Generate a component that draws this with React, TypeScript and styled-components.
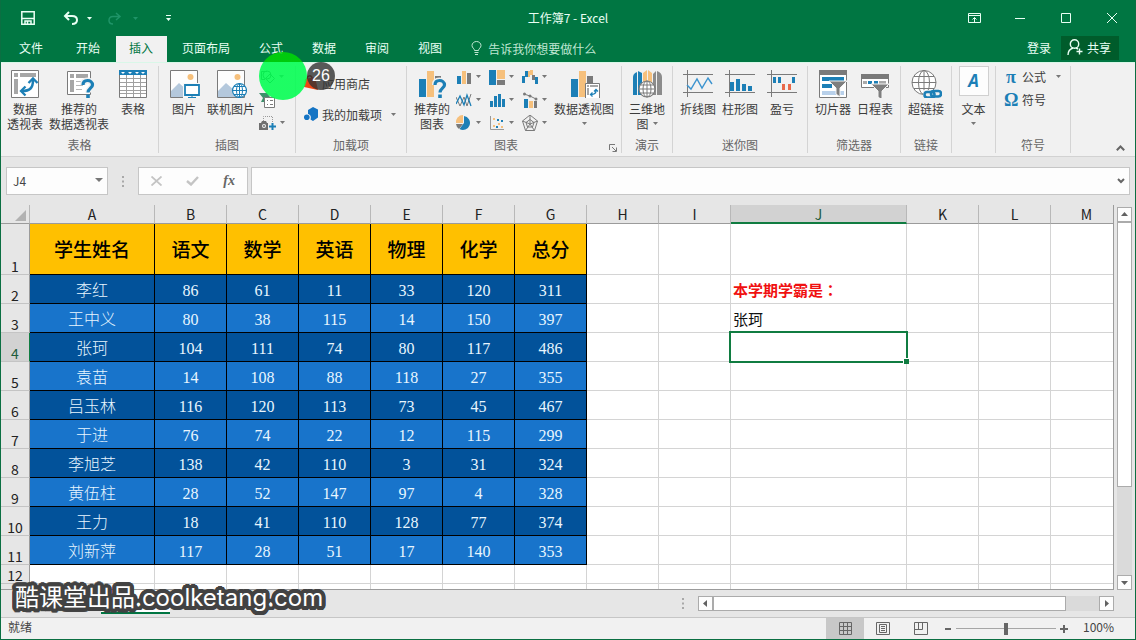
import React from "react";
import styled, { createGlobalStyle, css } from "styled-components";

const green = "#007642";
const blue = "#1c7fb6";
const sand = "#f6c07c";
const grey = "#7a7a7a";
const uiFont = `"Noto Sans CJK SC", "Noto Sans", sans-serif`;

const GlobalStyle = createGlobalStyle`
  *, *::before, *::after { box-sizing: border-box; }
  body { margin: 0; font-family: ${uiFont}; font-size: 12px; color: #444; }
  button, input { font: inherit; color: inherit; border: 0; padding: 0; margin: 0; background: none; border-radius: 0; }
  svg { display: block; flex: none; }
`;

const Window = styled.div`
  position: relative;
  display: flex;
  flex-direction: column;
  height: 100vh;
  overflow: hidden;
  background: #e6e6e6;
  border: 1px solid #0b6f42;
  border-top: 0;
`;

/* ---------- title bar ---------- */
const TitleBar = styled.header`
  display: grid;
  grid-template-columns: 1fr auto 1fr;
  align-items: center;
  height: 36px;
  flex: none;
  background: ${green};
  color: #e9fff4;
`;
const QuickAccess = styled.div`
  display: flex;
  align-items: center;
  padding-left: 20px;
`;
const QuickButton = styled.button<{ $gap?: number; $dim?: boolean }>`
  display: flex;
  margin-right: ${(p) => p.$gap ?? 0}px;
  color: ${(p) => (p.$dim ? "#1f9468" : "#e9fff4")};
`;
const Title = styled.h1`
  margin: 0;
  font-size: 12px;
  font-weight: 400;
  line-height: 18px;
`;
const WindowButtons = styled.div`
  display: flex;
  justify-content: flex-end;
`;
const WindowButton = styled.button`
  display: grid;
  place-items: center;
  width: 46px;
  height: 32px;
`;

/* ---------- ribbon tabs ---------- */
const TabBar = styled.nav`
  display: flex;
  height: 26px;
  flex: none;
  background: ${green};
  color: #e9fff4;
`;
const Tab = styled.button<{ $active?: boolean; $file?: boolean }>`
  margin: 0 1px;
  padding: ${(p) => (p.$file ? "0 18px 2px 17px" : "0 14px 2px 13px")};
  line-height: 24px;
  white-space: nowrap;
  ${(p) => p.$active && css`background: #f1f1f1; color: ${green};`}
`;
const TellMe = styled.button`
  display: flex;
  align-items: center;
  gap: 6px;
  margin-left: 14px;
  padding-bottom: 2px;
  color: #bfe6d2;
`;
const Account = styled.div`
  display: flex;
  align-items: center;
  gap: 10px;
  margin-left: auto;
  padding-right: 16px;
  padding-bottom: 2px;

  > button { padding-bottom: 2px; }
`;
const ShareButton = styled.button`
  display: flex;
  align-items: center;
  gap: 4px;
  height: 24px;
  padding: 0 8px 0 6px;
  background: #005c2b;
`;

/* ---------- ribbon ---------- */
const Ribbon = styled.section`
  position: relative;
  display: flex;
  flex: none;
  height: 95px;
  padding: 3px 0;
  background: #f1f1f1;
  border-top: 1px solid #d9f7e8;
  border-bottom: 1px solid #d2d2d2;
`;
const Group = styled.div<{ $w: number }>`
  display: flex;
  flex-direction: column;
  flex: none;
  position: relative;
  width: ${(p) => p.$w}px;
  border-right: 1px solid #d4d4d4;
`;
const GroupBody = styled.div<{ $pad?: number }>`
  display: flex;
  flex: 1;
  padding-left: ${(p) => p.$pad ?? 0}px;
`;
const GroupLabel = styled.div<{ $end?: number }>`
  height: 16px;
  padding-right: ${(p) => p.$end ?? 0}px;
  line-height: 16px;
  text-align: center;
  color: #666;
`;
const BigButton = styled.button<{ $w: number }>`
  display: flex;
  flex-direction: column;
  align-items: center;
  flex: none;
  width: ${(p) => p.$w}px;
  line-height: 15px;
  white-space: nowrap;
  text-align: center;
  color: #3c3c3c;

  > svg { margin-bottom: 3px; }
`;
const ButtonLine = styled.span`
  display: flex;
  align-items: center;
  justify-content: center;
  gap: 4px;
  height: 15px;
`;
const SmallGrid = styled.div<{ $cols: string }>`
  display: grid;
  grid-template-columns: ${(p) => p.$cols};
  grid-auto-rows: 23px;
  align-content: start;
  margin: -1px 0 0 2px;
`;
const SmallButton = styled.button`
  display: flex;
  align-items: center;
  gap: 4px;
`;
const AddInList = styled.div`
  display: flex;
  flex-direction: column;
  gap: 11px;
  padding-top: 7px;
`;
const AddInButton = styled.button`
  display: flex;
  align-items: center;
  gap: 3px;
  height: 20px;
  color: #3c3c3c;
  white-space: nowrap;

  > svg:last-child { margin-left: 6px; }
`;
const SymbolList = styled.div`
  display: flex;
  flex-direction: column;
  align-items: flex-start;
  margin-top: -1px;
`;
const SymbolButton = styled.button`
  display: flex;
  align-items: center;
  gap: 4px;
  height: 23px;
  color: #3c3c3c;

  > svg { margin-left: 6px; }
`;
const SymbolGlyph = styled.span`
  width: 14px;
  font: bold 18px/20px "Liberation Serif", serif;
  color: ${blue};
`;
const TextTile = styled.span`
  display: grid;
  place-items: center;
  width: 30px;
  height: 30px;
  margin-bottom: 5px;
  background: #fdfdfd;
  border: 1px solid #d0d0d0;
  font: italic bold 17px/20px "Open Sans", sans-serif;
  color: ${blue};
`;
const Launcher = styled.button`
  position: absolute;
  right: 4px;
  bottom: 1px;
`;
const Collapse = styled.button`
  align-self: flex-end;
  margin-left: auto;
  padding: 0 10px 2px 0;
`;
const ClickHalo = styled.div`
  position: absolute;
  z-index: 2;
  left: 258px;
  top: -11px;
  width: 48px;
  height: 48px;
  border-radius: 50%;
  background: linear-gradient(rgba(0, 212, 8, 0.9) 10px, rgba(0, 255, 80, 0.88) 10px);
`;
const ClickCount = styled.div`
  position: absolute;
  z-index: 3;
  left: 306px;
  top: -1px;
  width: 28px;
  height: 28px;
  border-radius: 50%;
  background: rgba(50, 50, 50, 0.8);
  color: #fff;
  font: 16px/28px "Liberation Sans", sans-serif;
  text-align: center;
`;

/* ---------- formula bar ---------- */
const FormulaBar = styled.div`
  display: flex;
  flex: none;
  height: 48px;
  padding: 10px 5px;
`;
const Field = styled.div`
  display: flex;
  align-items: center;
  height: 28px;
  background: #fdfdfd;
  border: 1px solid #c6c6c6;
`;
const NameBox = styled(Field)`
  width: 102px;
  padding: 0 4px 2px 6px;

  input { flex: 1; width: 0; }
`;
const Grip = styled.div`
  display: grid;
  place-items: center;
  width: 30px;
`;
const EntryTools = styled(Field)`
  width: 110px;
  justify-content: space-between;
  padding: 0 12px;
`;
const FormulaBox = styled(Field)`
  flex: 1;
  margin-left: 3px;
  padding: 0 4px;

  input { flex: 1; }
`;
const FxButton = styled.button`
  font: italic bold 14px/20px "Liberation Serif", serif;
  color: #666;
`;

/* ---------- sheet ---------- */
const SheetArea = styled.main`
  display: flex;
  flex: 1;
  min-height: 0;
  padding-right: 3px;
`;
const SheetView = styled.div`
  flex: 1;
  min-width: 0;
  overflow: hidden;
  border-right: 1px solid #9b9b9b;
  border-bottom: 1px solid #9b9b9b;
`;
const Grid = styled.table`
  width: max(100%, 1122px);
  table-layout: fixed;
  border-collapse: separate;
  border-spacing: 0;
  background: #fff;
`;
const ColHead = styled.th<{ $on?: boolean }>`
  height: 19px;
  padding: ${(p) => (p.$on ? 2 : 1)}px 0 1px;
  line-height: 14px;
  background: ${(p) => (p.$on ? "#d2d2d2" : "#e6e6e6")};
  border-right: 1px solid #b8b8b8;
  border-bottom: ${(p) => (p.$on ? `2px solid #107c41` : "1px solid #9b9b9b")};
  font-size: 14px;
  font-weight: 400;
  color: ${(p) => (p.$on ? "#1d5c3c" : "#222")};
`;
const Corner = styled(ColHead)`
  padding: 0 3px 2px 0;
  vertical-align: bottom;

  svg { margin-left: auto; }
`;
const Row = styled.tr<{ $h: number }>`
  height: ${(p) => p.$h}px;
`;
const RowHead = styled.th<{ $on?: boolean }>`
  padding: 0;
  vertical-align: bottom;
  line-height: 16px;
  background: ${(p) => (p.$on ? "#d2d2d2" : "#e6e6e6")};
  border-right: 1px solid ${(p) => (p.$on ? "#107c41" : "#9b9b9b")};
  border-bottom: 1px solid #c4c4c4;
  font-size: 14px;
  font-weight: 400;
  color: ${(p) => (p.$on ? "#1d5c3c" : "#222")};
`;
type CellKind = "head" | "dark" | "light" | "plain";
const fills: Record<CellKind, string> = { head: "#ffc000", dark: "#02529a", light: "#1874cb", plain: "#fff" };
const Cell = styled.td<{ $kind: CellKind }>`
  position: relative;
  padding: ${(p) => (p.$kind === "plain" ? 0 : 4)}px 0 0;
  text-align: center;
  white-space: nowrap;
  background: ${(p) => fills[p.$kind]};
  border-right: 1px solid ${(p) => (p.$kind === "plain" ? "#d4d4d4" : "#000")};
  border-bottom: 1px solid ${(p) => (p.$kind === "plain" ? "#d4d4d4" : "#000")};
  color: #e8f6ff;
  font: 300 16px/18px "Liberation Serif", "Noto Sans CJK SC", serif;
  ${(p) => p.$kind === "head" && css`color: #000; font-size: 19px; font-weight: 500;`}
`;
const NoteCell = styled(Cell)<{ $strong?: boolean }>`
  padding: 2px 0 0 2px;
  text-align: left;
  color: ${(p) => (p.$strong ? "#f01010" : "#111")};
  font: ${(p) => (p.$strong ? 700 : 400)} 15px/18px ${uiFont};
`;
const Colon = styled.span`
  font-family: "Noto Sans CJK TC", sans-serif;
`;
const Selection = styled.div`
  position: absolute;
  z-index: 1;
  inset: -2px;
  border: 2px solid #107c41;

  &::after {
    content: "";
    position: absolute;
    right: -3px;
    bottom: -3px;
    width: 6px;
    height: 6px;
    background: #107c41;
    border: solid #fff;
    border-width: 1px 0 0 1px;
  }
`;

/* ---------- scroll bars ---------- */
const VScroll = styled.div`
  display: flex;
  flex-direction: column;
  width: 15px;
  margin: 2px 0 0 3px;
  background: #dadada;
`;
const HScroll = styled.div`
  display: flex;
  width: 416px;
  height: 15px;
  background: #dadada;
`;
const ScrollButton = styled.button`
  display: grid;
  place-items: center;
  flex: none;
  width: 15px;
  height: 15px;
  background: #fdfdfd;
  border: 1px solid #ababab;
`;
const ScrollThumb = styled.div<{ $grow: number }>`
  flex: ${(p) => p.$grow};
  background: #fff;
  border: 1px solid #ababab;
`;
const ScrollRest = styled.div<{ $grow: number }>`
  flex: ${(p) => p.$grow};
`;

/* ---------- sheet tabs, status bar ---------- */
const SheetBar = styled.div`
  display: flex;
  align-items: center;
  flex: none;
  height: 28px;
  padding: 0 21px 0 100px;
  border-bottom: 1px solid #c6c6c6;
`;
const SheetTab = styled.button`
  align-self: flex-start;
  width: 69px;
  height: 24px;
  background: #fff;
  border-bottom: 2px solid ${green};
  color: ${green};
  font-weight: 700;
`;
const SheetGrip = styled.div`
  margin: 0 14px 0 auto;
`;
const StatusBar = styled.footer`
  display: flex;
  align-items: center;
  flex: none;
  height: 21px;
  padding: 0 20px 0 7px;
  background: #f1f1f1;
`;
const Ready = styled.span`
  margin-right: auto;
  padding-bottom: 4px;
  line-height: 17px;
`;
const ViewButton = styled.button<{ $on?: boolean }>`
  display: grid;
  place-items: center;
  width: 38px;
  height: 21px;
  background: ${(p) => (p.$on ? "#c8c8c8" : "transparent")};
`;
const ZoomStep = styled.button`
  display: grid;
  place-items: center;
  width: 16px;
  height: 20px;
`;
const ZoomSlider = styled.input`
  appearance: none;
  width: 100px;
  height: 12px;
  background: linear-gradient(#a6a6a6, #a6a6a6) center / 100% 1px no-repeat;

  &::-webkit-slider-thumb {
    appearance: none;
    width: 4px;
    height: 12px;
    background: #666;
  }
`;
const ZoomValue = styled.span`
  width: 32px;
  margin-left: 11px;
  padding-bottom: 4px;
  line-height: 17px;
`;

const outline = Array.from({ length: 24 }, (_, i) => {
  const a = (i * Math.PI) / 12;
  return `${(4 * Math.cos(a)).toFixed(1)}px ${(4 * Math.sin(a)).toFixed(1)}px 0 #424242`;
}).join(", ");
const Watermark = styled.div`
  position: absolute;
  z-index: 4;
  left: 14px;
  bottom: 24px;
  font: 24px/34px Inter, "Noto Sans CJK SC", sans-serif;
  color: #fff;
  white-space: nowrap;
  text-shadow: ${outline}, 0 0 4px #424242;
`;

/* ---------- icons ---------- */
const Caret = ({ color = "#777" }: { color?: string }) => (
  <svg width="5" height="3" viewBox="0 0 5 3"><path d="M0 0h5L2.5 3z" fill={color} /></svg>
);
const Dots = () => (
  <svg width="2" height="11" viewBox="0 0 2 11" fill="#a8a8a8"><path d="M0 0h2v2H0zM0 4.500h2v2H0zM0 9h2v2H0z" /></svg>
);
const Arrow = ({ d }: { d: string }) => (
  <svg width="7" height="7" viewBox="0 0 7 7"><path d={d} fill="#606060" /></svg>
);
const Big = ({ children }: { children: React.ReactNode }) => (
  <svg width="32" height="32" viewBox="0 1 32 32" fill="none">{children}</svg>
);
const Small = ({ children }: { children: React.ReactNode }) => (
  <svg width="16" height="16" viewBox="0 0 16 16" fill="none">{children}</svg>
);
const Question = ({ x, y }: { x: number; y: number }) => (
  <g transform={`translate(${x} ${y})`}>
    <path d="M2 6C2 2.500 4 1.500 6.500 1.500S11.500 3 11.500 6C11.500 9 7 9.500 7 13.500" stroke="#f1f1f1" strokeWidth="6" />
    <path d="M2 6C2 2.500 4 1.500 6.500 1.500S11.500 3 11.500 6C11.500 9 7 9.500 7 13.500" stroke={blue} strokeWidth="3.200" />
    <path d="M5.200 15.500h3.600v3.600H5.200z" fill={blue} />
  </g>
);
const PivotTableIcon = () => (
  <Big>
    <path d="M2.500 5.500h27v27h-27z" fill="#fff" stroke={grey} />
    <path d="M5 8h4v4H5zM11 8h16v4H11zM5 14h4v15H5z" fill="#a6a6a6" />
    <path d="M13 26c8 0 11-3 11-11" stroke={blue} strokeWidth="2.500" />
    <path d="M19.500 18L24 13.500l4.500 4.500M16.500 21.500L12 26l4.500 4.500" stroke={blue} strokeWidth="2.300" />
  </Big>
);
const RecommendedPivotIcon = () => (
  <Big>
    <path d="M4.500 6.500h23v23h-23z" fill="#fff" stroke={grey} />
    <path d="M7 9h4v4H7zM13 9h12v4H13zM7 15h4v12H7z" fill="#a6a6a6" />
    <path d="M13 16.500h8M13 20.500h7M13 24.500h6" stroke="#b8b8b8" />
    <Question x={18} y={14} />
  </Big>
);
const TableIcon = () => (
  <Big>
    <path d="M2.500 5.500h27v27h-27z" fill="#fff" stroke={grey} />
    <path d="M2 5h28v5H2z" fill={blue} />
    <path d="M4 7h4L6 9zM11 7h4l-2 2zM18 7h4l-2 2zM24 7h4l-2 2z" fill="#fff" />
    <path d="M9.500 10v22M16.500 10v22M23.500 10v22M3 13.500h26M3 17.500h26M3 21.500h26M3 25.500h26M3 28.500h26" stroke="#a0a0a0" />
  </Big>
);
const PictureBase = () => (
  <>
    <path d="M2.500 5.500h27v27h-27z" fill="#fdfdfd" stroke={grey} />
    <circle cx="22.500" cy="12" r="3" fill={sand} />
    <path d="M3 32V26l8-8 9 8v6z" fill="#b4c8dc" />
  </>
);
const PictureIcon = () => (
  <Big>
    <PictureBase />
    <path d="M15 18h17v15H15z" fill="#f8f8f8" />
    <path d="M17 20h14v10H17z" fill="#fff" stroke={blue} strokeWidth="1.800" />
    <path d="M20 32.500h8M24 30v2" stroke={blue} />
  </Big>
);
const OnlinePictureIcon = () => (
  <Big>
    <PictureBase />
    <circle cx="24.500" cy="25.500" r="7" fill="#fff" stroke={blue} strokeWidth="1.200" />
    <ellipse cx="24.500" cy="25.500" rx="3" ry="7" stroke={blue} />
    <path d="M18 25.500h13M19 21.500h11M19 29.500h11M24.500 19v13" stroke={blue} />
  </Big>
);
const ShapesIcon = () => (
  <Small>
    <path d="M8 2.500H2.500v8H6" stroke="#555" />
    <circle cx="8" cy="6" r="4" stroke="#555" />
    <path d="M11 5l4.500 4.500L11 14l-4.500-4.500z" stroke="#555" />
  </Small>
);
const SmartArtIcon = () => (
  <Small>
    <path d="M0 1h8l3 4H6v5H2l2-4z" fill="#3d8f6b" />
    <path d="M5.500 5.500h10v10h-10z" fill="#fff" stroke={grey} />
    <path d="M8 8.500h1M11 8.500h3M8 12.500h1M11 12.500h3" stroke={grey} />
  </Small>
);
const ScreenshotIcon = () => (
  <svg width="17" height="16" viewBox="0 0 17 16" fill="none">
    <path d="M4.500 6V1.500h9V7" stroke="#999" strokeDasharray="1 1" />
    <path d="M0 8h2l1-2h4l1 2h1v7H0z" fill="#6f6f6f" />
    <circle cx="5" cy="11" r="2" fill="#f1f1f1" /><circle cx="5" cy="11" r="1" fill="#6f6f6f" />
    <path d="M13.500 8v7M10 11.500h7" stroke={blue} strokeWidth="2" />
  </svg>
);
const StoreIcon = () => (
  <Small><path d="M2 4l10-2 3 13L1 12z" fill="#f04414" /><path d="M4 4c0-4 5-4 5-1" stroke="#a02808" strokeWidth="1.500" /></Small>
);
const AddInIcon = () => (
  <Small>
    <path d="M10 1l5 2.500v8L10 15l-2.500-1.500c1-2.500 0-5-2.500-5.500V4z" fill="#1474c4" /><circle cx="3.800" cy="11.200" r="2.800" fill="#1474c4" />
  </Small>
);
const BigBars = () => (
  <><path d="M3 14h7v18H3z" fill={blue} /><path d="M11 6h7v26h-7z" fill={sand} /><path d="M19 11h6v21h-6z" fill={grey} /></>
);
const RecommendedChartIcon = () => (
  <Big>
    <path d="M3 14h7v18H3z" fill={blue} /><path d="M11 6h7v26h-7z" fill={sand} /><path d="M19 11h6v4h-6z" fill={grey} />
    <Question x={17} y={14} />
  </Big>
);
const PivotChartIcon = () => (
  <Big>
    <BigBars />
    <path d="M17.500 18.500h14v15h-14z" fill="#fff" stroke={grey} />
    <path d="M19 20h2v2h-2zM22 20h8v2h-8zM19 23h2v7h-2z" fill="#a6a6a6" />
    <path d="M23 29.500c3 0 5-1 5-4M26 26.500l2-2 2 2M24.500 27.500l-2 2 2 2" stroke={blue} strokeWidth="1.300" />
  </Big>
);
const Map3DIcon = () => (
  <Big>
    <path d="M2 30V13c0-4 2-5 4-6v23zM7 30V6l4 2v22z" fill={blue} />
    <path d="M12 31V8l4-3v26zM17 31V5l4 3v23z" fill={sand} />
    <path d="M22 30V9l3-3v24zM26 30V6c3 1 5 3 5 6v18z" fill="#8c8c8c" />
    <circle cx="16" cy="24" r="8" fill="#fff" stroke={grey} strokeWidth="1.200" />
    <ellipse cx="16" cy="24" rx="4" ry="8" stroke={grey} /><path d="M8 24h16M9.500 20h13M9.500 28h13M16 16v16" stroke={grey} />
  </Big>
);
const chartIcons: React.ReactNode[] = [
  <><path d="M1 7h4v8H1z" fill={blue} /><path d="M6 2h4v13H6z" fill={sand} /><path d="M11 4h4v11h-4z" fill={grey} /></>,
  <><path d="M0 1h7v15H0z" fill={blue} /><path d="M8 1h8v9H8z" fill={sand} /><path d="M8 11h8v5H8z" fill={grey} /></>,
  <><path d="M0 7h3v7H0zM3 2h3v6H3z" fill={blue} /><path d="M6 2h2v6H6zM8 1h3v5H8z" fill={sand} /><path d="M10 6h3v5h-3z" fill={grey} /><path d="M13 8h3v7h-3z" fill={blue} /></>,
  <><path d="M0 5l4 9 4-9 3 9 4-12" stroke={grey} /><path d="M0 12L4 4l4 9 3-10 4 11" stroke={blue} strokeWidth="1.300" /></>,
  <path d="M1 9h3v6H1zM5 4h3v11H5zM9 2h3v13H9zM13 7h3v8h-3z" fill={blue} />,
  <><path d="M2 7h4v9H2z" fill={blue} /><path d="M7 9h4v7H7z" fill={sand} /><path d="M12 9h3v7h-3z" fill={grey} /><path d="M2 2l6 2 6 3" stroke={grey} /><circle cx="2.500" cy="2" r="1.500" fill={grey} /><circle cx="8" cy="4" r="1.500" fill={grey} /><circle cx="14" cy="7" r="1.500" fill={grey} /></>,
  <><path d="M7 0v8H0a7 7 0 0 1 7-8z" fill={sand} /><path d="M8 1a7 7 0 1 1-4.500 13L8 8z" fill={blue} /><path d="M0 9h7l-4 5A7 7 0 0 1 0 9z" fill={grey} /></>,
  <><path d="M1.500 1v13.500H15" stroke="#999" /><path d="M4 3h2v2H4zM9 8h2v2H9zM4 10h2v2H4zM12 11h2v2h-2z" fill={sand} /><path d="M8 4h2v2H8zM12 5h2v2h-2zM7 11h2v2H7z" fill={blue} /></>,
  <><path d="M8 0l7.500 6-3 9.500h-9L.5 6zM8 4.500l4 3-1.500 4.500h-5L4 7.500zM8 0v9l7.500-3M8 9l4.500 6.500M8 9l-4.500 6.500M8 9L.5 6" stroke={grey} /></>,
];
const SparkAxes = () => <path d="M5.500 5v27M1 9.500h30M1 27.500h30" stroke={grey} />;
const SparkLineIcon = () => (
  <Big><SparkAxes /><path d="M5 20l4 4 6-10 5 9 6-10 4 6" stroke="#3b93cf" strokeWidth="1.400" /></Big>
);
const SparkColumnIcon = () => (
  <Big><SparkAxes /><path d="M6 17h4v9H6zM12 14h4v12h-4zM18 19h4v7h-4zM24 21h4v5h-4z" fill={blue} /></Big>
);
const SparkWinLossIcon = () => (
  <Big><SparkAxes /><path d="M7 12h3v6H7zM12 12h3v6h-3zM26 12h3v6h-3z" fill={blue} /><path d="M16 19h3v6h-3zM22 19h3v6h-3z" fill="#e8694a" /></Big>
);
const Funnel = ({ y }: { y: number }) => (
  <path transform={`translate(0 ${y})`} d="M12 0h18l-7 7v9l-4-3V7z" fill="#7f7f7f" stroke="#f5f5f5" />
);
const SlicerIcon = () => (
  <Big>
    <path d="M2.500 5.500h27v27h-27z" fill="#fff" stroke={grey} /><path d="M2 5h28v5H2z" fill={grey} />
    <path d="M5 12h22v4H5zM5 19h10v4H5z" fill={blue} /><path d="M5 26h22v4H5z" fill="#b8d0ea" /><Funnel y={16} />
  </Big>
);
const TimelineIcon = () => (
  <Big>
    <path d="M2.500 9.500h27v13h-27z" fill="#fff" stroke={grey} /><path d="M2 9h28v5H2z" fill={grey} />
    <path d="M4 16h4v3H4zM20 16h7v3h-7z" fill="#aaa" /><path d="M9 16h4v3H9zM15 16h4v3h-4z" fill={blue} /><Funnel y={19} />
  </Big>
);
const LinkIcon = () => (
  <Big>
    <circle cx="14" cy="17.500" r="12" fill="#fff" stroke={grey} />
    <ellipse cx="14" cy="17.500" rx="5.500" ry="12" stroke={grey} /><path d="M2 17.500h24M4 11.500h20M4 23.500h20M14 5v25" stroke={grey} />
    <path d="M13 25h19v9H13z" fill="#f1f1f1" />
    <rect x="14.500" y="27" width="10" height="5.500" rx="2.700" stroke={blue} strokeWidth="2.600" />
    <rect x="21" y="26" width="10" height="5.500" rx="2.700" stroke={blue} strokeWidth="2.600" />
  </Big>
);

/* ---------- data ---------- */
const header = ["学生姓名", "语文", "数学", "英语", "物理", "化学", "总分"];
const students: (string | number)[][] = [
  ["李红", 86, 61, 11, 33, 120, 311],
  ["王中义", 80, 38, 115, 14, 150, 397],
  ["张珂", 104, 111, 74, 80, 117, 486],
  ["袁苗", 14, 108, 88, 118, 27, 355],
  ["吕玉林", 116, 120, 113, 73, 45, 467],
  ["于进", 76, 74, 22, 12, 115, 299],
  ["李旭芝", 138, 42, 110, 3, 31, 324],
  ["黄伍柱", 28, 52, 147, 97, 4, 328],
  ["王力", 18, 41, 110, 128, 77, 374],
  ["刘新萍", 117, 28, 51, 17, 140, 353],
];
const columns: [string, number | undefined][] = [
  ["A", 125], ["B", 72], ["C", 72], ["D", 72], ["E", 72], ["F", 72], ["G", 72],
  ["H", 72], ["I", 72], ["J", 176], ["K", 72], ["L", 72], ["M", undefined],
];
const rows = [header, ...students, [], []];

const renderCell = (row: number, col: number, value: string | number | undefined) => {
  if (col === 9 && row === 2) return <NoteCell key={col} $kind="plain" $strong>本学期学霸是<Colon>：</Colon></NoteCell>;
  if (col === 9 && row === 3) return <NoteCell key={col} $kind="plain">张珂</NoteCell>;
  if (col === 9 && row === 4) return <Cell key={col} $kind="plain"><Selection /></Cell>;
  if (value === undefined) return <Cell key={col} $kind="plain" />;
  return <Cell key={col} $kind={row === 1 ? "head" : row % 2 === 0 ? "dark" : "light"}>{value}</Cell>;
};

export default function App() {
  return (
    <Window>
      <GlobalStyle />
      <TitleBar>
        <QuickAccess>
          <QuickButton aria-label="保存" $gap={28}>
            <svg width="14" height="14" viewBox="0 0 14 14" fill="none" stroke="currentColor" strokeWidth="1.500"><path d="M.8.800h12.400v12.400H.8zM1 7.500h12M4 13v-3h6v3M6.500 10.500V13" /></svg>
          </QuickButton>
          <QuickButton aria-label="撤消" $gap={9}>
            <svg width="15" height="14" viewBox="0 0 15 14" fill="none" stroke="currentColor" strokeWidth="2"><path d="M6 1L2 5l4 4M2 5h7c3 0 5 1.500 5 4s-2 4-5 4" /></svg>
          </QuickButton>
          <QuickButton aria-label="撤消列表" $gap={16}><Caret color="#e9fff4" /></QuickButton>
          <QuickButton aria-label="恢复" $dim $gap={11}>
            <svg width="14" height="14" viewBox="0 0 14 14" fill="none" stroke="currentColor" strokeWidth="1.500"><path d="M8 2l4 3.500L8 9M12 5.500H5C2.500 5.500 1 7 1 9.500S2.500 13 5 13" /></svg>
          </QuickButton>
          <QuickButton aria-label="恢复列表" $dim $gap={27}><Caret color="#1f9468" /></QuickButton>
          <QuickButton aria-label="自定义快速访问工具栏">
            <svg width="7" height="6" viewBox="0 0 7 6" fill="currentColor"><path d="M1 0h5v1H1zM1 3h5L3.500 6z" /></svg>
          </QuickButton>
        </QuickAccess>
        <Title>工作簿7 - Excel</Title>
        <WindowButtons>
          <WindowButton aria-label="功能区显示选项">
            <svg width="13" height="10" viewBox="0 0 13 10" fill="none" stroke="currentColor"><path d="M.5.500h12v9H.5zM.5 2.500h12M6.500 9V4.500M4.500 6.500l2-2 2 2" /></svg>
          </WindowButton>
          <WindowButton aria-label="最小化"><svg width="10" height="10" viewBox="0 0 10 10" stroke="currentColor"><path d="M0 5.500h10" /></svg></WindowButton>
          <WindowButton aria-label="最大化"><svg width="10" height="10" viewBox="0 0 10 10" fill="none" stroke="currentColor"><path d="M.5.500h9v9h-9z" /></svg></WindowButton>
          <WindowButton aria-label="关闭"><svg width="10" height="10" viewBox="0 0 10 10" stroke="currentColor"><path d="M0 0l10 10M10 0L0 10" /></svg></WindowButton>
        </WindowButtons>
      </TitleBar>

      <TabBar>
        <Tab $file>文件</Tab>
        <Tab>开始</Tab>
        <Tab $active>插入</Tab>
        <Tab>页面布局</Tab>
        <Tab>公式</Tab>
        <Tab>数据</Tab>
        <Tab>审阅</Tab>
        <Tab>视图</Tab>
        <TellMe>
          <svg width="11" height="14" viewBox="0 0 11 14" fill="none" stroke="currentColor"><path d="M3.500 9.500C3.500 7.500 1 7 1 4.500a4.500 4 0 0 1 9 0C10 7 7.500 7.500 7.500 9.500zM3.500 11.500h4M4 13.500h3" /></svg>
          告诉我你想要做什么
        </TellMe>
        <Account>
          <button>登录</button>
          <ShareButton>
            <svg width="16" height="16" viewBox="0 0 16 16" fill="none" stroke="currentColor" strokeWidth="1.400"><circle cx="7.500" cy="5" r="4.200" /><path d="M1 16c0-4 2-6 5-7M9 9l2 1M12.500 9.500v6M9.500 12.500h6" /></svg>
            共享
          </ShareButton>
        </Account>
      </TabBar>

      <Ribbon>
        <Group $w={158}>
          <GroupBody>
            <BigButton $w={48}><PivotTableIcon /><ButtonLine>数据</ButtonLine><ButtonLine>透视表</ButtonLine></BigButton>
            <BigButton $w={60}><RecommendedPivotIcon /><ButtonLine>推荐的</ButtonLine><ButtonLine>数据透视表</ButtonLine></BigButton>
            <BigButton $w={48}><TableIcon /><ButtonLine>表格</ButtonLine></BigButton>
          </GroupBody>
          <GroupLabel>表格</GroupLabel>
        </Group>
        <Group $w={137}>
          <GroupBody $pad={4}>
            <BigButton $w={42}><PictureIcon /><ButtonLine>图片</ButtonLine></BigButton>
            <BigButton $w={52}><OnlinePictureIcon /><ButtonLine>联机图片</ButtonLine></BigButton>
            <SmallGrid $cols="30px">
              <SmallButton aria-label="形状"><ShapesIcon /><Caret /></SmallButton>
              <SmallButton aria-label="SmartArt"><SmartArtIcon /></SmallButton>
              <SmallButton aria-label="屏幕截图"><ScreenshotIcon /><Caret /></SmallButton>
            </SmallGrid>
          </GroupBody>
          <GroupLabel>插图</GroupLabel>
        </Group>
        <Group $w={111}>
          <GroupBody $pad={7}>
            <AddInList>
              <AddInButton><StoreIcon /><span>应用商店</span></AddInButton>
              <AddInButton><AddInIcon /><span>我的加载项</span><Caret /></AddInButton>
            </AddInList>
          </GroupBody>
          <GroupLabel>加载项</GroupLabel>
        </Group>
        <Group $w={215}>
          <GroupBody $pad={3}>
            <BigButton $w={44}><RecommendedChartIcon /><ButtonLine>推荐的</ButtonLine><ButtonLine>图表</ButtonLine></BigButton>
            <SmallGrid $cols="33px 33px 31px">
              {chartIcons.map((icon, i) => (
                <SmallButton key={i} aria-label={`图表 ${i + 1}`}><Small>{icon}</Small><Caret /></SmallButton>
              ))}
            </SmallGrid>
            <BigButton $w={62}><PivotChartIcon /><ButtonLine>数据透视图</ButtonLine><ButtonLine><Caret /></ButtonLine></BigButton>
          </GroupBody>
          <GroupLabel $end={16}>图表</GroupLabel>
          <Launcher aria-label="图表选项">
            <svg width="8" height="8" viewBox="0 0 8 8" fill="none" stroke="#777"><path d="M.5 6V.500H6M3 3l4 4M7.500 3.500v4h-4" /></svg>
          </Launcher>
        </Group>
        <Group $w={51}>
          <GroupBody>
            <BigButton $w={50}><Map3DIcon /><ButtonLine>三维地</ButtonLine><ButtonLine>图<Caret /></ButtonLine></BigButton>
          </GroupBody>
          <GroupLabel>演示</GroupLabel>
        </Group>
        <Group $w={135}>
          <GroupBody $pad={4}>
            <BigButton $w={42}><SparkLineIcon /><ButtonLine>折线图</ButtonLine></BigButton>
            <BigButton $w={42}><SparkColumnIcon /><ButtonLine>柱形图</ButtonLine></BigButton>
            <BigButton $w={42}><SparkWinLossIcon /><ButtonLine>盈亏</ButtonLine></BigButton>
          </GroupBody>
          <GroupLabel>迷你图</GroupLabel>
        </Group>
        <Group $w={93}>
          <GroupBody $pad={4}>
            <BigButton $w={42}><SlicerIcon /><ButtonLine>切片器</ButtonLine></BigButton>
            <BigButton $w={42}><TimelineIcon /><ButtonLine>日程表</ButtonLine></BigButton>
          </GroupBody>
          <GroupLabel>筛选器</GroupLabel>
        </Group>
        <Group $w={51}>
          <GroupBody>
            <BigButton $w={50}><LinkIcon /><ButtonLine>超链接</ButtonLine></BigButton>
          </GroupBody>
          <GroupLabel>链接</GroupLabel>
        </Group>
        <Group $w={44}>
          <GroupBody>
            <BigButton $w={43}><TextTile>A</TextTile><ButtonLine>文本</ButtonLine><ButtonLine><Caret /></ButtonLine></BigButton>
          </GroupBody>
        </Group>
        <Group $w={75}>
          <GroupBody $pad={8}>
            <SymbolList>
              <SymbolButton><SymbolGlyph>π</SymbolGlyph>公式<Caret /></SymbolButton>
              <SymbolButton><SymbolGlyph>Ω</SymbolGlyph>符号</SymbolButton>
            </SymbolList>
          </GroupBody>
          <GroupLabel>符号</GroupLabel>
        </Group>
        <Collapse aria-label="折叠功能区">
          <svg width="9" height="6" viewBox="0 0 9 6" fill="none" stroke="#666" strokeWidth="2"><path d="M.8 5.200l3.700-3.700 3.700 3.700" /></svg>
        </Collapse>
        <ClickHalo />
        <ClickCount>26</ClickCount>
      </Ribbon>

      <FormulaBar>
        <NameBox>
          <input aria-label="名称框" defaultValue="J4" />
          <button aria-label="名称列表"><svg width="8" height="4" viewBox="0 0 8 4"><path d="M0 0h8L4 4z" fill="#777" /></svg></button>
        </NameBox>
        <Grip><Dots /></Grip>
        <EntryTools>
          <button aria-label="取消"><svg width="11" height="10" viewBox="0 0 11 10" stroke="#c4c4c4" strokeWidth="1.800"><path d="M.5.500l10 9M10.500.500l-10 9" /></svg></button>
          <button aria-label="输入"><svg width="13" height="10" viewBox="0 0 13 10" fill="none" stroke="#c4c4c4" strokeWidth="2.400"><path d="M1 5l4 3.500L12 1" /></svg></button>
          <FxButton aria-label="插入函数">fx</FxButton>
        </EntryTools>
        <FormulaBox>
          <input aria-label="编辑栏" />
          <button aria-label="展开编辑栏"><svg width="8" height="6" viewBox="0 0 8 6" fill="none" stroke="#666" strokeWidth="2"><path d="M1 1l3 3 3-3" /></svg></button>
        </FormulaBox>
      </FormulaBar>

      <SheetArea>
        <SheetView>
          <Grid>
            <colgroup>
              <col width={29} />
              {columns.map(([name, width]) => <col key={name} width={width} />)}
            </colgroup>
            <thead>
              <tr>
                <Corner aria-label="全选"><svg width="11" height="11" viewBox="0 0 11 11"><path d="M11 0v11H0z" fill="#b2b2b2" /></svg></Corner>
                {columns.map(([name]) => <ColHead key={name} $on={name === "J"}>{name}</ColHead>)}
              </tr>
            </thead>
            <tbody>
              {rows.map((data, i) => (
                <Row key={i} $h={i === 0 ? 51 : i < 11 ? 29 : 19}>
                  <RowHead $on={i === 3}>{i < 12 ? i + 1 : ""}</RowHead>
                  {columns.map((_, col) => renderCell(i + 1, col, data[col]))}
                </Row>
              ))}
            </tbody>
          </Grid>
        </SheetView>
        <VScroll>
          <ScrollButton aria-label="向上滚动"><Arrow d="M0 5h7L3.500 1z" /></ScrollButton>
          <ScrollThumb $grow={3} />
          <ScrollRest $grow={1} />
          <ScrollButton aria-label="向下滚动"><Arrow d="M0 2h7L3.500 6z" /></ScrollButton>
        </VScroll>
      </SheetArea>

      <SheetBar>
        <SheetTab>Sheet1</SheetTab>
        <SheetGrip><Dots /></SheetGrip>
        <HScroll>
          <ScrollButton aria-label="向左滚动"><Arrow d="M5 0v7L1 3.500z" /></ScrollButton>
          <ScrollThumb $grow={21} />
          <ScrollRest $grow={2} />
          <ScrollButton aria-label="向右滚动"><Arrow d="M2 0v7l4-3.500z" /></ScrollButton>
        </HScroll>
      </SheetBar>

      <StatusBar>
        <Ready>就绪</Ready>
        <ViewButton $on aria-label="普通">
          <svg width="13" height="13" viewBox="0 0 13 13" fill="none" stroke="#666"><path d="M.5.500h12v12H.5zM4.500.500v12M8.500.500v12M.5 4.500h12M.5 8.500h12" /></svg>
        </ViewButton>
        <ViewButton aria-label="页面布局视图">
          <svg width="14" height="13" viewBox="0 0 14 13" fill="none" stroke="#666"><path d="M.5.500h13v12H.5zM3.500 2.500h7v8h-7zM5 4.500h4M5 6.500h4M5 8.500h4" /></svg>
        </ViewButton>
        <ViewButton aria-label="分页预览">
          <svg width="14" height="13" viewBox="0 0 14 13" fill="none" stroke="#666"><path d="M.5.500h13v12H.5zM4.500.500v7M8.500.500v7M.5 7.500h8" /></svg>
        </ViewButton>
        <ZoomStep aria-label="缩小"><svg width="6" height="2"><path d="M0 0h6v2H0z" fill="#666" /></svg></ZoomStep>
        <ZoomSlider type="range" aria-label="显示比例" min={0} max={100} defaultValue={50} />
        <ZoomStep aria-label="放大"><svg width="8" height="8"><path d="M3 0h2v3h3v2H5v3H3V5H0V3h3z" fill="#666" /></svg></ZoomStep>
        <ZoomValue>100%</ZoomValue>
      </StatusBar>

      <Watermark>酷课堂出品.coolketang.com</Watermark>
    </Window>
  );
}
